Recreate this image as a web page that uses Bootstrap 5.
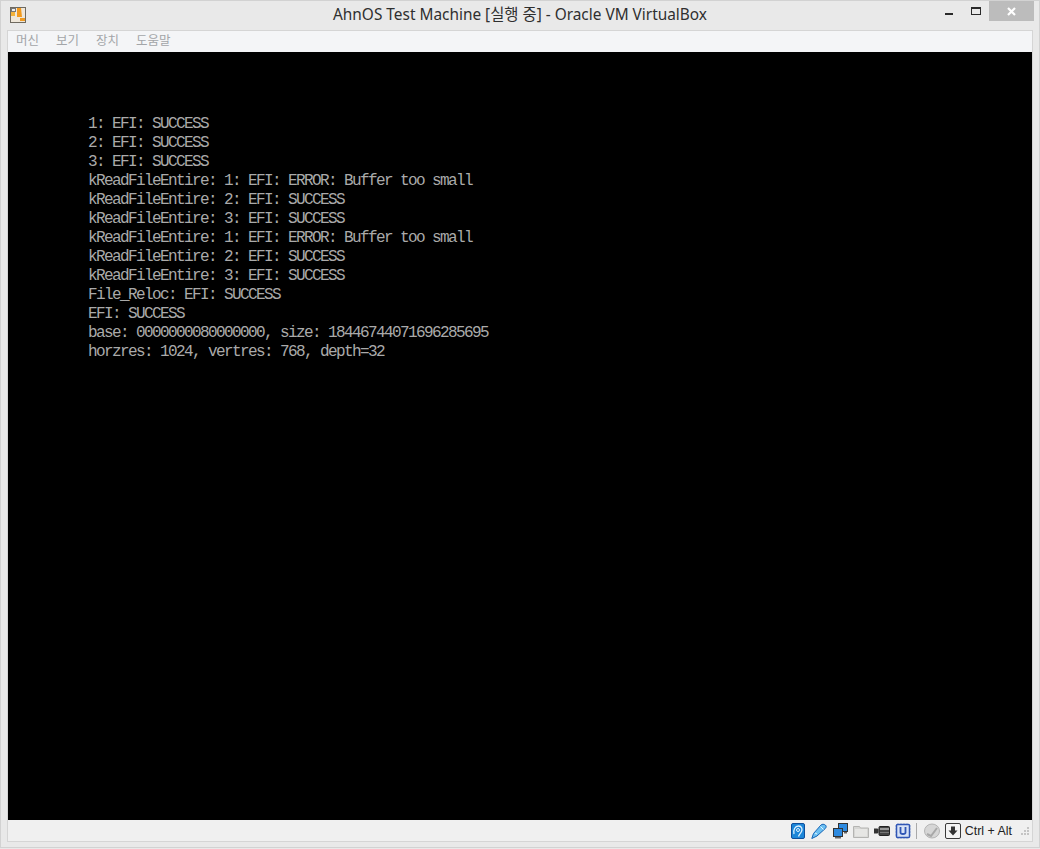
<!DOCTYPE html>
<html lang="ko">
<head>
<meta charset="utf-8">
<title>AhnOS Test Machine</title>
<link href="https://cdn.jsdelivr.net/npm/bootstrap@5.3.0/dist/css/bootstrap.min.css" rel="stylesheet">
<script src="https://cdn.jsdelivr.net/npm/bootstrap@5.3.0/dist/js/bootstrap.bundle.min.js"></script>
<style>
html,body{margin:0;height:849px;overflow:hidden;background:#e9e9e9}
.vb-window{width:1040px;height:848px;background:#e9e9e9;border:1px solid #d2d2d2}
.vb-title{height:29px;position:relative;padding-left:9px;flex:none}
.vb-title-text{position:absolute;left:0;right:0;top:4px;text-align:center;font:15.4px/20px "Noto Sans","Noto Sans CJK KR",sans-serif;color:#2f2f2f}
.vb-icon-app{margin-top:6px}
.vb-caption{height:20px;margin-right:5px}
.vb-btn{width:27px;height:20px;display:flex;align-items:center;justify-content:center}
.vb-min svg{margin-top:5px}
.vb-close{background:#bcbcbc;width:45px}
.vb-inner{margin:0 6px;border:1px solid #d5d5d5;width:1026px;flex:none}
.vb-menu{height:21px;background:#f4f5f7;padding-left:8px;gap:17px;font:12.5px/17px "Noto Sans CJK KR",sans-serif;color:#a3a5a8}
.vb-screen{height:768px;background:#000;padding:63px 0 0 80px}
.vb-console{margin:0;font:16px/19px "Liberation Mono",monospace;letter-spacing:-1.6px;color:#aaa;white-space:pre;overflow:hidden}
.vb-status{height:21px;background:#f0f0f0;padding-right:2px;gap:5px}
.vb-status svg{display:block;flex:none}
.vb-sep{width:1px;height:16px;background:#a9a9a9;margin:0 2px 0 0}
.vb-keys{font:12.4px/16px "Liberation Sans",sans-serif;color:#222;margin:0 3px 0 -1px}
</style>
</head>
<body>
<div class="vb-window d-flex flex-column">
  <div class="vb-title d-flex justify-content-between align-items-start">
    <svg class="vb-icon-app" width="16" height="16" viewBox="0 0 16 16">
      <rect x=".5" y=".5" width="15" height="15" fill="#efe7da" stroke="#6f6a60"/>
      <rect x="1" y="1" width="5" height="4" fill="#777"/>
      <rect x="2" y="2" width="3" height="2" fill="#eee"/>
      <rect x="1" y="5" width="4" height="4" fill="#f3b23a"/>
      <path d="M7 1h4l1 9h-5z" fill="#f29a1e"/>
      <rect x="10" y="11" width="5" height="3" fill="#ef9a22"/>
    </svg>
    <div class="vb-title-text">AhnOS Test Machine [실행 중] - Oracle VM VirtualBox</div>
    <div class="vb-caption d-flex position-relative">
      <div class="vb-btn vb-min"><svg width="8" height="2" viewBox="0 0 8 2"><rect width="8" height="2" fill="#2a2a2a"/></svg></div>
      <div class="vb-btn"><svg width="10" height="8" viewBox="0 0 10 8"><rect x=".5" y=".5" width="9" height="7" fill="none" stroke="#2a2a2a"/><rect width="10" height="2" fill="#2a2a2a"/></svg></div>
      <div class="vb-btn vb-close"><svg width="9" height="9" viewBox="0 0 9 9"><path d="M1 1l7 7M8 1l-7 7" stroke="#fff" stroke-width="2.200" fill="none"/></svg></div>
    </div>
  </div>
  <div class="vb-inner">
    <div class="vb-menu d-flex">
      <span>머신</span><span>보기</span><span>장치</span><span>도움말</span>
    </div>
    <div class="vb-screen"><pre class="vb-console">1: EFI: SUCCESS
2: EFI: SUCCESS
3: EFI: SUCCESS
kReadFileEntire: 1: EFI: ERROR: Buffer too small
kReadFileEntire: 2: EFI: SUCCESS
kReadFileEntire: 3: EFI: SUCCESS
kReadFileEntire: 1: EFI: ERROR: Buffer too small
kReadFileEntire: 2: EFI: SUCCESS
kReadFileEntire: 3: EFI: SUCCESS
File_Reloc: EFI: SUCCESS
EFI: SUCCESS
base: 0000000080000000, size: 18446744071696285695
horzres: 1024, vertres: 768, depth=32</pre></div>
    <div class="vb-status d-flex justify-content-end align-items-center">
      <svg width="16" height="16" viewBox="0 0 16 16"><rect x="1.500" y=".5" width="13" height="15" rx="1.500" fill="#1c86d8" stroke="#0f4f9c"/><path d="M4 11c-1-4 1-8 4.500-8s4 3.500 3 5.500-2.500 3-3 5" fill="none" stroke="#dff1ff" stroke-width="1.300"/><circle cx="8" cy="7" r="1.500" fill="none" stroke="#dff1ff"/></svg>
      <svg width="16" height="16" viewBox="0 0 16 16"><path d="M.8 15.500l1.700-5L10 2c1-1 3-1 4.300 0s1 2.500 0 3.500L6 13z" fill="#6cc0f2" stroke="#1463b5"/><path d="M9.500 3.500l3 3" stroke="#e4f4ff"/><path d="M4 10l2 1" stroke="#e4f4ff"/></svg>
      <svg width="16" height="16" viewBox="0 0 16 16"><rect x="6.500" y=".5" width="9" height="8" fill="#2d8ae0" stroke="#333"/><rect x="1.500" y="5.500" width="9" height="8" fill="#2d8ae0" stroke="#333"/><rect x="3" y="14" width="6" height="1.500" fill="#666"/><path d="M12 9v1.500h3V9" fill="#666"/></svg>
      <svg width="16" height="16" viewBox="0 0 16 16"><path d="M.5 3.500h6l1 1.500h8v9.500H.5z" fill="#d6d6d4" stroke="#b4b4b2"/><rect x="2" y="6" width="12" height="7.500" fill="#e6e6e4"/></svg>
      <svg width="16" height="16" viewBox="0 0 16 16"><rect x="5" y="3.500" width="10.500" height="9" rx="1" fill="#444" stroke="#222"/><rect x="6" y="5" width="9" height="2" fill="#9a9a9a"/><rect x="6" y="9" width="9" height="1" fill="#777"/><path d="M0 5.500h3.500l1 1v3l-1 1H0z" fill="#333"/></svg>
      <svg width="16" height="16" viewBox="0 0 16 16"><rect x="1.500" y="1.500" width="13" height="13" rx="1" fill="#d7e2f6" stroke="#2f55b5" stroke-width="1.500"/><path d="M5.500 4v5.500c0 2 5 2 5 0V4" fill="none" stroke="#2f55b5" stroke-width="1.800"/><path d="M0 3h1M0 6h1M0 9h1M0 12h1M15 3h1M15 6h1M15 9h1M15 12h1M3 0v1M6 0v1M9 0v1M12 0v1M3 15v1M6 15v1M9 15v1M12 15v1" stroke="#8fa3cf"/></svg>
      <div class="vb-sep"></div>
      <svg width="16" height="16" viewBox="0 0 16 16"><ellipse cx="8" cy="8" rx="7.500" ry="7" fill="#d6d6d6" stroke="#b4b4b4"/><path d="M3 11l4 2 6-8" fill="none" stroke="#a8a8a8" stroke-width="2"/></svg>
      <svg width="16" height="16" viewBox="0 0 16 16"><rect x=".5" y=".5" width="15" height="15" rx="1.500" fill="#f4f4f4" stroke="#3a3a3a"/><path d="M6 3.500h4v4h2.500L8 12.500 3.500 7.500H6z" fill="#333"/></svg>
      <span class="vb-keys">Ctrl + Alt</span>
      <svg width="10" height="10" viewBox="0 0 10 10" fill="#c4c4c4"><rect x="7" y="1" width="2" height="2"/><rect x="4" y="4" width="2" height="2"/><rect x="7" y="4" width="2" height="2"/><rect x="1" y="7" width="2" height="2"/><rect x="4" y="7" width="2" height="2"/><rect x="7" y="7" width="2" height="2"/></svg>
    </div>
  </div>
</div>
</body>
</html>
